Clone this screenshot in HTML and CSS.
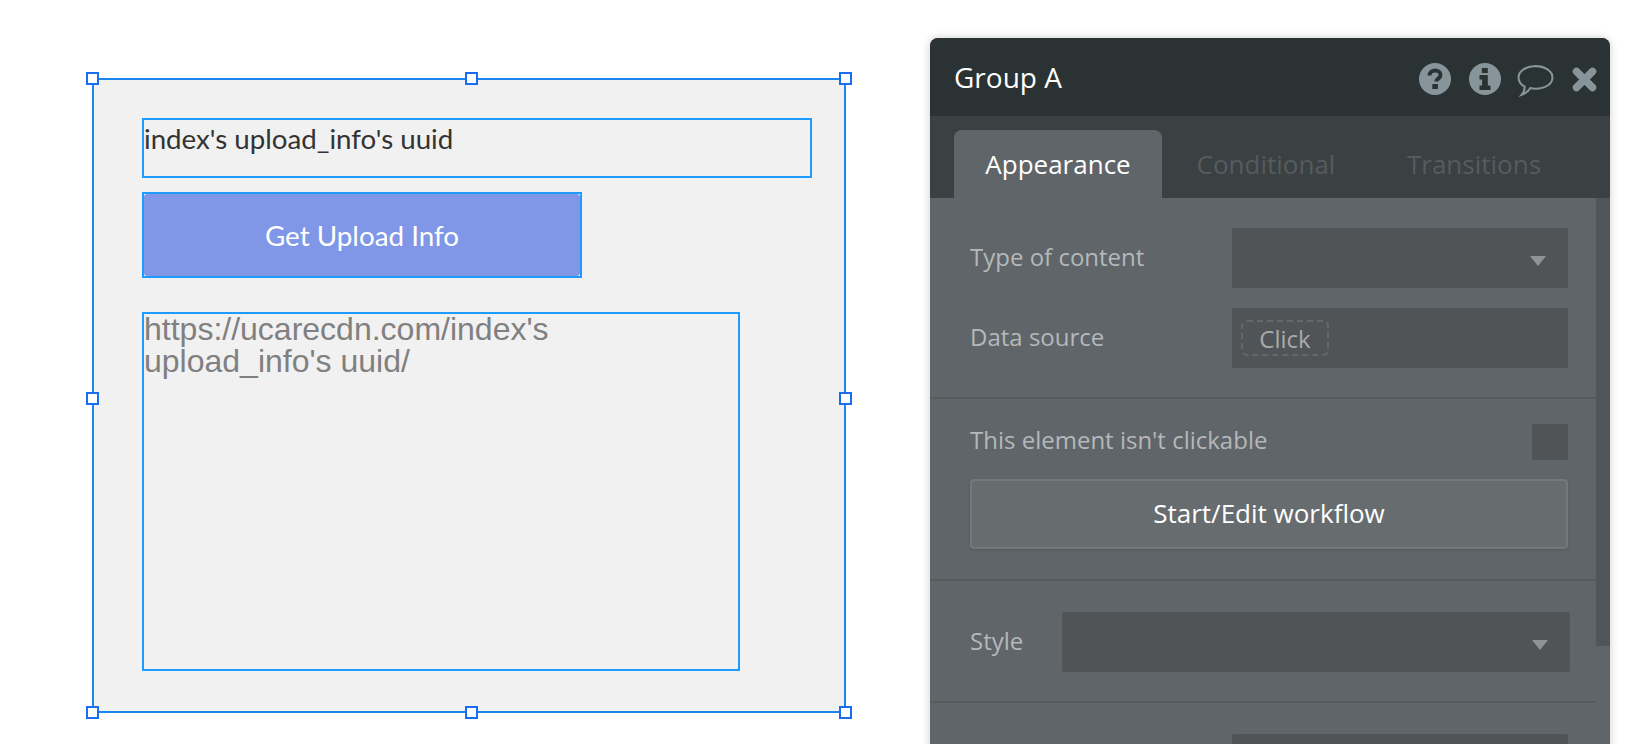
FILE: index.html
```html
<!DOCTYPE html>
<html lang="en">
<head>
<meta charset="utf-8">
<title>Group A</title>
<link rel="stylesheet" href="styles.css">
</head>
<body>
<div class="page">
  <div class="group">
    <span class="handle h-tl"></span><span class="handle h-tc"></span><span class="handle h-tr"></span>
    <span class="handle h-ml"></span><span class="handle h-mr"></span>
    <span class="handle h-bl"></span><span class="handle h-bc"></span><span class="handle h-br"></span>
    <div class="text-el">index's upload_info's uuid</div>
    <div class="btn-el"><div class="btn-fill">Get Upload Info</div></div>
    <div class="html-el"><div class="html-text">https://ucarecdn.com/index's upload_info's uuid/</div></div>
  </div>
  <aside class="panel">
    <header class="panel-head">
      <div class="panel-title">Group A</div>
      <div class="panel-icons">
        <svg class="ico ico-q" viewBox="0 0 32 32"><circle cx="16" cy="16" r="16" fill="#87949a"/><path d="M10.5 12.5c0-3 2.300-5 5.600-5 3.200 0 5.400 1.800 5.400 4.400 0 3.600-4.300 3.600-4.300 6.600" fill="none" stroke="#2a3234" stroke-width="4"/><rect x="13.300" y="21" width="5.600" height="5" fill="#2a3234"/></svg>
        <svg class="ico ico-i" viewBox="0 0 32 32"><circle cx="16" cy="16" r="16" fill="#87949a"/><rect x="12.800" y="5" width="6" height="5" fill="#2a3234"/><path d="M10.500 12h8.300v10.500h2.700v4.500h-11v-4.500h2.600v-6h-2.600z" fill="#2a3234"/></svg>
        <svg class="ico ico-c" viewBox="0 0 36 32"><path d="M18 2c9 0 16.500 4.700 16.500 11S27.500 24 18 24c-2 0-3.500-.2-5-.6-1.500 2.800-4 5-8.500 6.600 2-2.400 3-4.600 3-8C4 20 1.500 17 1.500 13 1.500 6.700 9 2 18 2z" fill="none" stroke="#87949a" stroke-width="2"/></svg>
        <svg class="ico ico-x" viewBox="0 0 25 25"><path d="M4.500 4.500l16 16M20.500 4.500l-16 16" fill="none" stroke="#87949a" stroke-width="7.500" stroke-linecap="round"/></svg>
      </div>
    </header>
    <nav class="tabs">
      <div class="tab tab-active">Appearance</div>
      <div class="tab tab-cond">Conditional</div>
      <div class="tab tab-trans">Transitions</div>
    </nav>
    <div class="panel-body">
      <div class="panel-content">
        <section class="section section-a">
          <div class="row">
            <div class="label">Type of content</div>
            <div class="select"><span class="caret"></span></div>
          </div>
          <div class="row">
            <div class="label">Data source</div>
            <div class="select"><span class="chip">Click</span></div>
          </div>
        </section>
        <section class="section section-b">
          <div class="row row-check">
            <div class="label label-check">This element isn't clickable</div>
            <span class="checkbox"></span>
          </div>
          <div class="wf-btn">Start/Edit workflow</div>
        </section>
        <section class="section section-c">
          <div class="row row-style">
            <div class="label">Style</div>
            <div class="select select-wide"><span class="caret"></span></div>
          </div>
        </section>
        <section class="section section-d">
          <div class="row">
            <div class="label"></div>
            <div class="select"></div>
          </div>
        </section>
      </div>
      <div class="scrollbar"></div>
    </div>
  </aside>
</div>
</body>
</html>
```
FILE: styles.css
```css
* { box-sizing: border-box; }
html, body { margin: 0; padding: 0; background: #fff; }
body { width: 1652px; height: 744px; overflow: hidden; }
.page { display: flex; align-items: flex-start; height: 744px; overflow: hidden; padding-left: 92px; }

/* canvas group */
.group { position: relative; width: 754px; height: 635px; margin-top: 78px; background: #f1f1f1; border: 2px solid #1c86ee; padding: 38px 0 0 48px; flex: none; }
.handle { position: absolute; width: 13px; height: 13px; background: #fff; border: 2px solid #1a6cf0; }
.h-tl { left: -8px; top: -8px; }
.h-tc { left: 371px; top: -8px; }
.h-tr { right: -8px; top: -8px; }
.h-ml { left: -8px; top: 312px; }
.h-mr { right: -8px; top: 312px; }
.h-bl { left: -8px; bottom: -8px; }
.h-bc { left: 371px; bottom: -8px; }
.h-br { right: -8px; bottom: -8px; }

.text-el { width: 670px; height: 60px; border: 2px solid #1e9bff; font: 27.700px/38px Lato, sans-serif; color: #333; }
.btn-el { width: 440px; height: 86px; margin-top: 14px; border: 2px solid #1e9bff; background: #fff; }
.btn-fill { height: 100%; background: #7f97e6; border-radius: 3px; display: flex; align-items: center; justify-content: center; font: 27.800px Lato, sans-serif; color: #fff; }
.html-el { width: 598px; height: 359px; margin-top: 34px; border: 2px solid #1e9bff; padding-right: 60px; font: 32px/32px "Liberation Sans", Arial, sans-serif; color: #808080; }
.html-text { margin-top: -1px; }

/* property panel */
.panel { width: 680px; height: 744px; margin: 38px 0 0 84px; flex: none; background: #606569; border-radius: 8px 8px 0 0; box-shadow: 0 0 8px rgba(0,0,0,.2); font-family: "Open Sans", sans-serif; overflow: hidden; display: flex; flex-direction: column; }
.panel-head { height: 78px; flex: none; background: #2a3234; display: flex; align-items: center; justify-content: space-between; padding: 0 13px 0 24px; }
.panel-title { font-size: 28px; color: #fff; }
.panel-icons { display: flex; align-items: center; padding-top: 4px; }
.ico { display: block; flex: none; }
.ico-q { width: 32px; height: 32px; }
.ico-i { width: 32px; height: 32px; margin-left: 18px; }
.ico-c { width: 37px; height: 33px; margin-left: 16px; margin-top: 3px; }
.ico-x { width: 25px; height: 25px; margin-left: 18px; }

.tabs { height: 82px; flex: none; background: #3b4043; display: flex; align-items: flex-end; padding-left: 24px; }
.tab { height: 68px; font-size: 26px; display: flex; align-items: center; justify-content: center; color: #565b5e; }
.tab-active { width: 208px; background: #606569; color: #fff; border-radius: 8px 8px 0 0; }
.tab-cond { width: 208px; }
.tab-trans { width: 208px; }

.panel-body { flex: 1; display: flex; align-items: flex-start; min-height: 0; }
.panel-content { width: 666px; flex: none; }
.scrollbar { width: 14px; height: 448px; flex: none; background: #50555a; }

.section { padding: 30px 28px 0 40px; border-bottom: 2px solid #565b5e; }
.section-a { height: 201px; }
.section-b { height: 182px; padding-top: 25px; }
.section-c { height: 122px; padding-top: 31px; }
.section-d { border-bottom: 0; padding-top: 31px; }

.row { display: flex; align-items: center; justify-content: space-between; height: 60px; }
.row + .row { margin-top: 20px; }
.label { font-size: 24px; color: #b5b8ba; padding-bottom: 4px; }
.label-check { padding-bottom: 5px; }
.select { position: relative; width: 336px; height: 60px; background: #505457; border-radius: 2px; display: flex; align-items: center; padding-left: 9px; }
.select-wide { width: 508px; margin-right: -2px; }
.caret { position: absolute; right: 22px; top: 28px; width: 0; height: 0; border-left: 8px solid transparent; border-right: 8px solid transparent; border-top: 10px solid #8f9396; }
.chip { width: 88px; height: 36px; border: 2px dashed #63686b; border-radius: 6px; display: flex; align-items: center; justify-content: center; font-size: 24px; color: #a7abad; }

.row-check { height: 36px; }
.checkbox { width: 36px; height: 36px; background: #505457; border-radius: 2px; flex: none; }
.wf-btn { height: 70px; margin-top: 19px; padding-bottom: 2px; background: #676c6f; border: 2px solid #73787b; border-radius: 4px; box-shadow: 0 1px 3px rgba(0,0,0,.15); display: flex; align-items: center; justify-content: center; font-size: 26px; color: #fff; }
```
